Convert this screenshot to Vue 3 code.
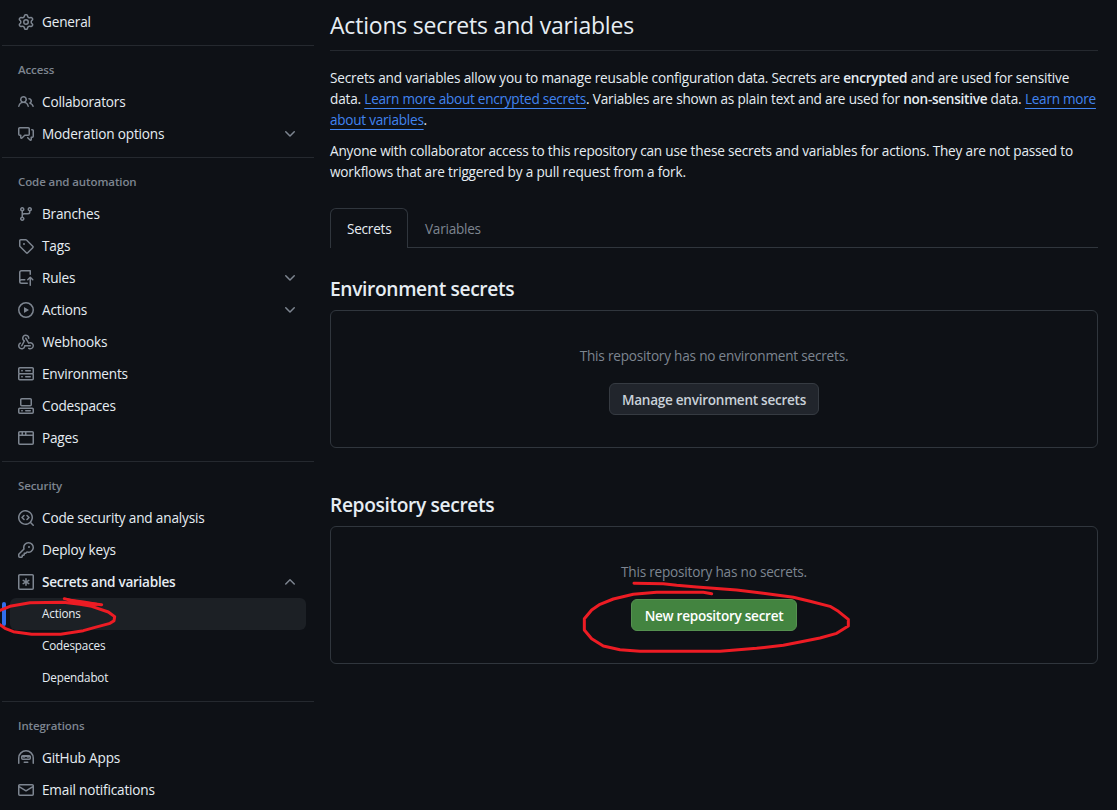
<script setup>
const icons = {
  gear: 'M8 0a8.2 8.2 0 0 1 .701.031C9.444.095 9.99.645 10.16 1.29l.288 1.107c.018.066.079.158.212.224.231.114.454.243.668.386.123.082.233.09.299.071l1.103-.303c.644-.176 1.392.021 1.82.63.27.385.506.792.704 1.218.315.675.111 1.422-.364 1.891l-.814.806c-.049.048-.098.147-.088.294.016.257.016.515 0 .772-.01.147.038.246.088.294l.814.806c.475.469.679 1.216.364 1.891a7.977 7.977 0 0 1-.704 1.217c-.428.61-1.176.807-1.82.63l-1.102-.302c-.067-.019-.177-.011-.3.071a5.909 5.909 0 0 1-.668.386c-.133.066-.194.158-.211.224l-.29 1.106c-.168.646-.715 1.196-1.458 1.26a8.006 8.006 0 0 1-1.402 0c-.743-.064-1.289-.614-1.458-1.26l-.289-1.106c-.018-.066-.079-.158-.212-.224a5.738 5.738 0 0 1-.668-.386c-.123-.082-.233-.09-.299-.071l-1.103.303c-.644.176-1.392-.021-1.82-.63a8.12 8.12 0 0 1-.704-1.218c-.315-.675-.111-1.422.363-1.891l.815-.806c.05-.048.098-.147.088-.294a6.214 6.214 0 0 1 0-.772c.01-.147-.038-.246-.088-.294l-.815-.806C.635 6.045.431 5.298.746 4.623a7.92 7.92 0 0 1 .704-1.217c.428-.61 1.176-.807 1.82-.63l1.102.302c.067.019.177.011.3-.071.214-.143.437-.272.668-.386.133-.066.194-.158.211-.224l.29-1.106C6.009.645 6.556.095 7.299.03 7.53.01 7.764 0 8 0Zm-.571 1.525c-.036.003-.108.036-.137.146l-.289 1.105c-.147.561-.549.967-.998 1.189-.173.086-.34.183-.5.29-.417.278-.97.423-1.529.27l-1.103-.303c-.109-.03-.175.016-.195.045-.22.312-.412.644-.573.99-.014.031-.021.11.059.19l.815.806c.411.406.562.957.53 1.456a4.709 4.709 0 0 0 0 .582c.032.499-.119 1.05-.53 1.456l-.815.806c-.081.08-.073.159-.059.19.162.346.353.677.573.989.02.03.085.076.195.046l1.102-.303c.56-.153 1.113-.008 1.53.27.161.107.328.204.501.29.447.222.85.629.997 1.189l.289 1.105c.029.109.101.143.137.146a6.6 6.6 0 0 0 1.142 0c.036-.003.108-.036.137-.146l.289-1.105c.147-.561.549-.967.998-1.189.173-.086.34-.183.5-.29.417-.278.97-.423 1.529-.27l1.103.303c.109.029.175-.016.195-.045.22-.313.411-.644.573-.99.014-.031.021-.11-.059-.19l-.815-.806c-.411-.406-.562-.957-.53-1.456a4.709 4.709 0 0 0 0-.582c-.032-.499.119-1.05.53-1.456l.815-.806c.081-.08.073-.159.059-.19a6.464 6.464 0 0 0-.573-.989c-.02-.03-.085-.076-.195-.046l-1.102.303c-.56.153-1.113.008-1.53-.27a4.44 4.44 0 0 0-.501-.29c-.447-.222-.85-.629-.997-1.189l-.289-1.105c-.029-.11-.101-.143-.137-.146a6.6 6.6 0 0 0-1.142 0ZM11 8a3 3 0 1 1-6 0 3 3 0 0 1 6 0ZM9.5 8a1.5 1.5 0 1 0-3.001.001A1.5 1.5 0 0 0 9.5 8Z',
  people: 'M2 5.5a3.5 3.5 0 1 1 5.898 2.549 5.508 5.508 0 0 1 3.034 4.084.75.75 0 1 1-1.482.235 4 4 0 0 0-7.9 0 .75.75 0 0 1-1.482-.236A5.507 5.507 0 0 1 3.102 8.05 3.493 3.493 0 0 1 2 5.5ZM11 4a3.001 3.001 0 0 1 2.22 5.018 5.01 5.01 0 0 1 2.56 3.012.749.749 0 0 1-.885.954.752.752 0 0 1-.549-.514 3.507 3.507 0 0 0-2.522-2.372.75.75 0 0 1-.574-.73v-.352a.75.75 0 0 1 .416-.672A1.5 1.5 0 0 0 11 5.5.75.75 0 0 1 11 4Zm-5.5-.5a2 2 0 1 0-.001 3.999A2 2 0 0 0 5.5 3.5Z',
  discussion: 'M1.75 1h8.5c.966 0 1.75.784 1.75 1.75v5.5A1.75 1.75 0 0 1 10.25 10H7.061l-2.574 2.573A1.458 1.458 0 0 1 2 11.543V10h-.25A1.75 1.75 0 0 1 0 8.25v-5.5C0 1.784.784 1 1.75 1ZM1.5 2.75v5.5c0 .138.112.25.25.25h1a.75.75 0 0 1 .75.75v2.19l2.72-2.72a.749.749 0 0 1 .53-.22h3.5a.25.25 0 0 0 .25-.25v-5.5a.25.25 0 0 0-.25-.25h-8.5a.25.25 0 0 0-.25.25Zm13 2a.25.25 0 0 0-.25-.25h-.5a.75.75 0 0 1 0-1.5h.5c.966 0 1.75.784 1.75 1.75v5.5A1.75 1.75 0 0 1 14.25 12H14v1.543a1.458 1.458 0 0 1-2.487 1.03L9.22 12.28a.749.749 0 0 1 .326-1.275.749.749 0 0 1 .734.215l2.22 2.22v-2.19a.75.75 0 0 1 .75-.75h1a.25.25 0 0 0 .25-.25Z',
  branch: 'M9.5 3.25a2.25 2.25 0 1 1 3 2.122V6A2.5 2.5 0 0 1 10 8.5H6a1 1 0 0 0-1 1v1.128a2.251 2.251 0 1 1-1.5 0V5.372a2.25 2.25 0 1 1 1.5 0v1.836A2.493 2.493 0 0 1 6 7h4a1 1 0 0 0 1-1v-.628A2.25 2.25 0 0 1 9.5 3.25Zm-6 0a.75.75 0 1 0 1.5 0 .75.75 0 0 0-1.5 0Zm8.25-.75a.75.75 0 1 0 0 1.5.75.75 0 0 0 0-1.5ZM4.25 12a.75.75 0 1 0 0 1.5.75.75 0 0 0 0-1.5Z',
  tag: 'M1 7.775V2.75C1 1.784 1.784 1 2.75 1h5.025c.464 0 .91.184 1.238.513l6.25 6.25a1.75 1.75 0 0 1 0 2.474l-5.026 5.026a1.75 1.75 0 0 1-2.474 0l-6.25-6.25A1.752 1.752 0 0 1 1 7.775Zm1.5 0c0 .066.026.13.073.177l6.25 6.25a.25.25 0 0 0 .354 0l5.025-5.025a.25.25 0 0 0 0-.354l-6.25-6.25a.25.25 0 0 0-.177-.073H2.75a.25.25 0 0 0-.25.25ZM6 5a1 1 0 1 1 0 2 1 1 0 0 1 0-2Z',
  push: 'M1 2.5A2.5 2.5 0 0 1 3.5 0h8.75a.75.75 0 0 1 .75.75v3.5a.75.75 0 0 1-1.5 0V1.5h-8a1 1 0 0 0-1 1v6.708A2.493 2.493 0 0 1 3.5 9h3.25a.75.75 0 0 1 0 1.5H3.5a1 1 0 0 0 0 2h5.75a.75.75 0 0 1 0 1.5H3.5A2.5 2.5 0 0 1 1 11.5Zm13.23 7.79h-.001l-1.224-1.224v6.184a.75.75 0 0 1-1.5 0V9.066L10.28 10.29a.75.75 0 0 1-1.06-1.061l2.505-2.504a.75.75 0 0 1 1.06 0L15.29 9.23a.751.751 0 0 1-.018 1.042.751.751 0 0 1-1.042.018Z',
  play: 'M8 0a8 8 0 1 1 0 16A8 8 0 0 1 8 0ZM1.5 8a6.5 6.5 0 1 0 13 0 6.5 6.5 0 0 0-13 0Zm4.879-2.773 4.264 2.559a.25.25 0 0 1 0 .428l-4.264 2.559A.25.25 0 0 1 6 10.559V5.442a.25.25 0 0 1 .379-.215Z',
  webhook: 'M5.5 4.25a2.25 2.25 0 0 1 4.5 0 .75.75 0 0 0 1.5 0 3.75 3.75 0 1 0-6.14 2.889l-2.272 4.258a.75.75 0 0 0 1.324.706L7 7.25a.75.75 0 0 0-.309-1.015A2.25 2.25 0 0 1 5.5 4.25Z M7.364 3.607a.75.75 0 0 1 1.03.257l2.608 4.349a3.75 3.75 0 1 1-.628 6.785.75.75 0 0 1 .752-1.299 2.25 2.25 0 1 0-.033-3.88.75.75 0 0 1-1.03-.256L7.107 4.636a.75.75 0 0 1 .257-1.03Z M2.9 8.776A.75.75 0 0 1 2.625 9.8 2.25 2.25 0 1 0 6 11.75a.75.75 0 0 1 .75-.751h5.5a.75.75 0 0 1 0 1.5H7.425a3.751 3.751 0 1 1-5.55-3.998.75.75 0 0 1 1.024.274Z',
  server: 'M1.75 1h12.5c.966 0 1.75.784 1.75 1.75v4c0 .372-.116.717-.314 1 .198.283.314.628.314 1v4a1.75 1.75 0 0 1-1.75 1.75H1.75A1.75 1.75 0 0 1 0 12.75v-4c0-.358.109-.707.314-1a1.739 1.739 0 0 1-.314-1v-4C0 1.784.784 1 1.75 1ZM1.5 2.75v4c0 .138.112.25.25.25h12.5a.25.25 0 0 0 .25-.25v-4a.25.25 0 0 0-.25-.25H1.75a.25.25 0 0 0-.25.25Zm.25 5.75a.25.25 0 0 0-.25.25v4c0 .138.112.25.25.25h12.5a.25.25 0 0 0 .25-.25v-4a.25.25 0 0 0-.25-.25ZM7 4.75A.75.75 0 0 1 7.75 4h4.5a.75.75 0 0 1 0 1.5h-4.5A.75.75 0 0 1 7 4.75ZM7.75 10h4.5a.75.75 0 0 1 0 1.5h-4.5a.75.75 0 0 1 0-1.5ZM3 4.75A.75.75 0 0 1 3.75 4h.5a.75.75 0 0 1 0 1.5h-.5A.75.75 0 0 1 3 4.75ZM3.75 10h.5a.75.75 0 0 1 0 1.5h-.5a.75.75 0 0 1 0-1.5Z',
  codespaces: 'M0 11.25c0-.966.784-1.75 1.75-1.75h12.5c.966 0 1.75.784 1.75 1.75v3A1.75 1.75 0 0 1 14.25 16H1.75A1.75 1.75 0 0 1 0 14.25Zm2-9.5C2 .784 2.784 0 3.75 0h8.5C13.216 0 14 .784 14 1.75v5a1.75 1.75 0 0 1-1.75 1.75h-8.5A1.75 1.75 0 0 1 2 6.75Zm1.75-.25a.25.25 0 0 0-.25.25v5c0 .138.112.25.25.25h8.5a.25.25 0 0 0 .25-.25v-5a.25.25 0 0 0-.25-.25Zm-2 9.5a.25.25 0 0 0-.25.25v3c0 .138.112.25.25.25h12.5a.25.25 0 0 0 .25-.25v-3a.25.25 0 0 0-.25-.25Z M7 12.75a.75.75 0 0 1 .75-.75h4.5a.75.75 0 0 1 0 1.5h-4.5a.75.75 0 0 1-.75-.75Zm-4 0a.75.75 0 0 1 .75-.75h.5a.75.75 0 0 1 0 1.5h-.5a.75.75 0 0 1-.75-.75Z',
  browser: 'M0 2.75C0 1.784.784 1 1.75 1h12.5c.966 0 1.75.784 1.75 1.75v10.5A1.75 1.75 0 0 1 14.25 15H1.75A1.75 1.75 0 0 1 0 13.25ZM14.5 6h-13v7.25c0 .138.112.25.25.25h12.5a.25.25 0 0 0 .25-.25Zm-6-3.5v2h6V2.75a.25.25 0 0 0-.25-.25ZM5 2.5v2h2v-2Zm-3.25 0a.25.25 0 0 0-.25.25V4.5h2v-2Z',
  codescan: 'M8.47 4.97a.75.75 0 0 0 0 1.06L9.94 7.5 8.47 8.97a.75.75 0 1 0 1.06 1.06l2-2a.75.75 0 0 0 0-1.06l-2-2a.75.75 0 0 0-1.06 0ZM6.53 6.03a.75.75 0 0 0-1.06-1.06l-2 2a.75.75 0 0 0 0 1.06l2 2a.75.75 0 1 0 1.06-1.06L5.06 7.5l1.47-1.47Z M12.246 13.307a7.501 7.501 0 1 1 1.06-1.06l2.474 2.473a.749.749 0 0 1-.326 1.275.749.749 0 0 1-.734-.215ZM1.5 7.5a6.002 6.002 0 0 0 3.608 5.504 6.002 6.002 0 0 0 6.486-1.117.748.748 0 0 1 .292-.293A6 6 0 1 0 1.5 7.5Z',
  key: 'M10.5 0a5.499 5.499 0 1 1-1.288 10.848l-.932.932a.749.749 0 0 1-.53.22H7v.75a.749.749 0 0 1-.22.53l-.5.5a.749.749 0 0 1-.53.22H5v.75a.749.749 0 0 1-.22.53l-.5.5a.749.749 0 0 1-.53.22h-2A1.75 1.75 0 0 1 0 14.25v-2c0-.199.079-.389.22-.53l4.932-4.932A5.5 5.5 0 0 1 10.5 0Zm-4 5.5c-.001.431.069.86.205 1.269a.75.75 0 0 1-.181.768L1.5 12.56v1.69c0 .138.112.25.25.25h1.69l.06-.06v-1.19a.75.75 0 0 1 .75-.75h1.19l.06-.06v-1.19a.75.75 0 0 1 .75-.75h1.19l1.023-1.025a.75.75 0 0 1 .768-.18A4 4 0 1 0 6.5 5.5ZM11 6a1 1 0 1 1 0-2 1 1 0 0 1 0 2Z',
  asterisk: 'M1.75 0h12.5C15.216 0 16 .784 16 1.75v12.5A1.75 1.75 0 0 1 14.25 16H1.75A1.75 1.75 0 0 1 0 14.25V1.75C0 .784.784 0 1.75 0ZM1.5 1.75v12.5c0 .138.112.25.25.25h12.5a.25.25 0 0 0 .25-.25V1.75a.25.25 0 0 0-.25-.25H1.75a.25.25 0 0 0-.25.25Z M8 4a.75.75 0 0 1 .75.75V6.7l1.69-.975a.75.75 0 0 1 .75 1.3L9.5 8l1.69.976a.75.75 0 0 1-.75 1.298L8.75 9.3v1.951a.75.75 0 0 1-1.5 0V9.299l-1.69.976a.75.75 0 0 1-.75-1.3L6.5 8l-1.69-.975a.75.75 0 0 1 .75-1.3l1.69.976V4.75A.75.75 0 0 1 8 4Z',
  hubot: 'M0 8a8 8 0 1 1 16 0v5.25a.75.75 0 0 1-1.5 0V8a6.5 6.5 0 1 0-13 0v5.25a.75.75 0 0 1-1.5 0V8Zm5.5 4.25a.75.75 0 0 1 .75-.75h3.5a.75.75 0 0 1 0 1.5h-3.5a.75.75 0 0 1-.75-.75Z M3 6.75C3 5.784 3.784 5 4.75 5h6.5c.966 0 1.75.784 1.75 1.75v1.5A1.75 1.75 0 0 1 11.25 10h-6.5A1.75 1.75 0 0 1 3 8.25ZM4.5 6.9v1.35c0 .138.112.25.25.25h6.5a.25.25 0 0 0 .25-.25V6.9L10 8.1 8.5 6.9h-1L6 8.1Z',
  mail: 'M1.75 2h12.5c.966 0 1.75.784 1.75 1.75v8.5A1.75 1.75 0 0 1 14.25 14H1.75A1.75 1.75 0 0 1 0 12.25v-8.5C0 2.784.784 2 1.75 2ZM1.5 12.251c0 .138.112.25.25.25h12.5a.25.25 0 0 0 .25-.25V5.809L8.38 9.397a.75.75 0 0 1-.76 0L1.5 5.809v6.442Zm13-8.181v-.32a.25.25 0 0 0-.25-.25H1.75a.25.25 0 0 0-.25.25v.32L8 7.88Z',
  down: 'M12.78 5.22a.749.749 0 0 1 0 1.06l-4.25 4.25a.749.749 0 0 1-1.06 0L3.22 6.28a.749.749 0 1 1 1.06-1.06L8 8.939l3.72-3.719a.749.749 0 0 1 1.06 0Z',
  up: 'M3.22 10.53a.749.749 0 0 1 0-1.06l4.25-4.25a.749.749 0 0 1 1.06 0l4.25 4.25a.749.749 0 1 1-1.06 1.06L8 6.811 4.28 10.53a.749.749 0 0 1-1.06 0Z',
}

const groups = [
  { items: [{ label: 'General', icon: 'gear' }] },
  {
    title: 'Access',
    items: [
      { label: 'Collaborators', icon: 'people' },
      { label: 'Moderation options', icon: 'discussion', chevron: 'down' },
    ],
  },
  {
    title: 'Code and automation',
    items: [
      { label: 'Branches', icon: 'branch' },
      { label: 'Tags', icon: 'tag' },
      { label: 'Rules', icon: 'push', chevron: 'down' },
      { label: 'Actions', icon: 'play', chevron: 'down' },
      { label: 'Webhooks', icon: 'webhook' },
      { label: 'Environments', icon: 'server' },
      { label: 'Codespaces', icon: 'codespaces' },
      { label: 'Pages', icon: 'browser' },
    ],
  },
  {
    title: 'Security',
    items: [
      { label: 'Code security and analysis', icon: 'codescan' },
      { label: 'Deploy keys', icon: 'key' },
      { label: 'Secrets and variables', icon: 'asterisk', chevron: 'up', bold: true },
      { label: 'Actions', sub: true, current: true },
      { label: 'Codespaces', sub: true },
      { label: 'Dependabot', sub: true },
    ],
  },
  {
    title: 'Integrations',
    items: [
      { label: 'GitHub Apps', icon: 'hubot' },
      { label: 'Email notifications', icon: 'mail' },
    ],
  },
]
</script>

<template>
  <div class="page">
    <nav class="sidebar">
      <section v-for="(group, g) in groups" :key="g" class="group">
        <h3 v-if="group.title" class="group-title">{{ group.title }}</h3>
        <a
          v-for="item in group.items"
          :key="item.label"
          class="item"
          :class="{ sub: item.sub, current: item.current, bold: item.bold }"
        >
          <svg v-if="item.icon" class="icon" viewBox="0 0 16 16"><path fill-rule="evenodd" :d="icons[item.icon]" /></svg>
          <span class="label">{{ item.label }}</span>
          <svg v-if="item.chevron" class="icon chevron" viewBox="0 0 16 16"><path :d="icons[item.chevron]" /></svg>
        </a>
      </section>
    </nav>

    <main class="main">
      <h1 class="title">Actions secrets and variables</h1>
      <p class="para">
        Secrets and variables allow you to manage reusable configuration data. Secrets are <b>encrypted</b> and are used for sensitive<br />
        data. <a class="link">Learn more about encrypted secrets</a>. Variables are shown as plain text and are used for <b>non-sensitive</b> data. <a class="link">Learn more<br />
        about variables</a>.
      </p>
      <p class="para">
        Anyone with collaborator access to this repository can use these secrets and variables for actions. They are not passed to<br />
        workflows that are triggered by a pull request from a fork.
      </p>

      <div class="tabs">
        <a class="tab active">Secrets</a>
        <a class="tab">Variables</a>
      </div>

      <h2 class="subtitle">Environment secrets</h2>
      <div class="box">
        <p class="empty">This repository has no environment secrets.</p>
        <button class="btn">Manage environment secrets</button>
      </div>

      <h2 class="subtitle second">Repository secrets</h2>
      <div class="box">
        <p class="empty">This repository has no secrets.</p>
        <button class="btn primary">New repository secret</button>
      </div>
    </main>

    <!-- Hand-drawn marks over the selected item and the button -->
    <svg class="marks" viewBox="0 0 1117 810">
      <g transform="translate(0 590) scale(.33333)">
        <path d="M193 26L215 32L250 38L305 44M-6 64L30 49L90 38L190 37L240 43L275 49L325 66L344 80L342 92L330 100L285 112L250 122L182 133L95 133L40 125L15 115L-6 100" />
        <path d="M205 30L250 36L290 43L250 42Z" />
      </g>
      <g transform="translate(570 550) scale(.33333)">
        <path d="M192 100L280 101L320 106L380 111L430 115L500 120L580 130L670 142L720 154L780 169L805 184L835 208L835 228L800 250L750 264L690 276L640 286L560 295L450 304L210 304L150 299L100 288L65 266L43 240L43 206L65 180L90 163L130 147L190 133L260 127L400 127L425 131" />
      </g>
    </svg>
  </div>
</template>

<style>
html,
body {
  background: #0e1116;
}
</style>

<style scoped>
.page {
  position: relative;
  display: flex;
  width: 1117px;
  height: 810px;
  overflow: hidden;
  box-sizing: border-box;
  background: #0e1116;
  color: #e6edf3;
  font-family: 'Open Sans', 'Noto Sans', sans-serif;
  font-size: 13.6px;
  letter-spacing: -0.18px;
  line-height: 21px;
}
.sidebar {
  width: 312px;
  margin-left: 2px;
  padding-top: 6px;
  flex: none;
}
.group + .group {
  margin-top: 7px;
  padding-top: 8px;
  border-top: 1px solid #25292f;
}
.group-title {
  margin: 0;
  padding-left: 16px;
  height: 32px;
  line-height: 32px;
  font-size: 11.5px;
  letter-spacing: -0.1px;
  font-weight: 600;
  color: #7d8590;
}
.item {
  position: relative;
  display: flex;
  align-items: center;
  gap: 8px;
  height: 32px;
  margin: 0 8px;
  padding: 0 8px;
  border-radius: 6px;
  box-sizing: border-box;
  white-space: nowrap;
}
.label {
  padding-bottom: 2px;
}
.sub {
  padding-left: 32px;
  font-size: 11.7px;
  letter-spacing: -0.17px;
}
.bold {
  font-weight: 600;
  letter-spacing: -0.28px;
}
.current {
  background: #1c2025;
}
.current::before {
  content: '';
  position: absolute;
  left: -8px;
  top: 4px;
  width: 4px;
  height: 24px;
  border-radius: 6px;
  background: #316dea;
}
.icon {
  width: 16px;
  height: 16px;
  flex: none;
  fill: #7d8590;
}
.chevron {
  margin-left: auto;
}
.main {
  width: 768px;
  margin-left: 16px;
  white-space: nowrap;
}
.title {
  margin: 0 0 16px;
  height: 50px;
  line-height: 51px;
  border-bottom: 1px solid #25292f;
  font-size: 23px;
  letter-spacing: -0.2px;
  font-weight: 400;
}
.para {
  margin: 0 0 10px;
}
.para b {
  font-weight: 600;
  letter-spacing: -0.28px;
}
.link {
  color: #4184f0;
  letter-spacing: -0.26px;
  text-decoration: underline;
  text-underline-offset: 4px;
  text-decoration-thickness: 1px;
}
.tabs {
  display: flex;
  height: 40px;
  margin-top: 26px;
  box-sizing: border-box;
  border-bottom: 1px solid #30363d;
}
.tab {
  height: 40px;
  padding: 0 16px;
  line-height: 39px;
  border: 1px solid transparent;
  border-bottom: 0;
  box-sizing: border-box;
  letter-spacing: -0.25px;
  color: #7d8590;
}
.active {
  width: 78px;
  color: #e6edf3;
  background: #0e1116;
  border-color: #30363d;
  border-radius: 6px 6px 0 0;
}
.subtitle {
  margin: 25px 0 7px;
  height: 30px;
  line-height: 31px;
  font-size: 19.2px;
  letter-spacing: -0.36px;
  font-weight: 600;
}
.second {
  margin-top: 41px;
}
.box {
  display: flex;
  flex-direction: column;
  align-items: center;
  height: 138px;
  padding-top: 34px;
  box-sizing: border-box;
  border: 1px solid #30363d;
  border-radius: 6px;
}
.empty {
  margin: 0 0 17px;
  color: #7d8590;
  letter-spacing: -0.21px;
}
.btn {
  width: 210px;
  height: 32px;
  padding: 1px 0 0;
  border: 1px solid #363b42;
  border-radius: 6px;
  background: #21252c;
  color: #c9d1d9;
  font: 600 13.6px/20px 'Open Sans', 'Noto Sans', sans-serif;
  letter-spacing: -0.28px;
}
.primary {
  width: 166px;
  border-color: #559150;
  background: #438440;
  color: #fff;
}
.marks {
  position: absolute;
  left: 0;
  top: 0;
  width: 1117px;
  height: 810px;
  pointer-events: none;
}
.marks path {
  fill: none;
  stroke: #ed1c24;
  stroke-width: 9;
  stroke-linecap: round;
  stroke-linejoin: round;
}
</style>
